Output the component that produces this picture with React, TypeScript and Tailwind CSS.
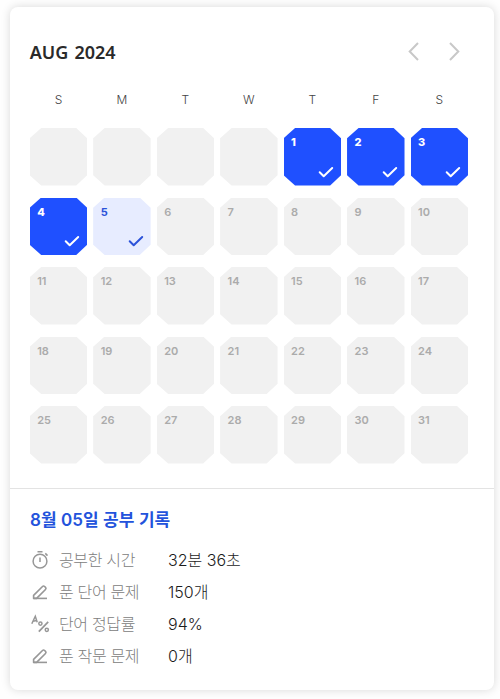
import React from 'react';

type DayStatus = 'done' | 'selected' | 'idle';

interface DayCellProps {
  day: number | null;
  status: DayStatus;
}

const WEEKDAYS = ['S', 'M', 'T', 'W', 'T', 'F', 'S'];

// August 2024 starts on a Thursday
const DAYS: Array<number | null> = [
  null, null, null, null,
  ...Array.from({ length: 31 }, (_, i) => i + 1),
];

const cellStyles: Record<DayStatus, string> = {
  done: 'bg-[#1f50ff] text-white font-extrabold',
  selected: 'bg-[#e7ecff] text-[#2b52d9] font-bold',
  idle: 'bg-[#f1f1f1] text-[#ababab] font-semibold',
};

const getStatus = (day: number | null): DayStatus => {
  if (day === null || day > 5) return 'idle';
  return day === 5 ? 'selected' : 'done';
};

const CheckIcon = () => (
  <svg width="16" height="12" viewBox="0 0 16 12" fill="none" stroke="currentColor" strokeWidth="2" strokeLinecap="round" strokeLinejoin="round">
    <path d="M1.7 6.3 L5.7 10.2 L14.2 2" />
  </svg>
);

const TimerIcon = () => (
  <svg width="20" height="20" viewBox="0 0 20 20" fill="none" stroke="#979797" strokeWidth="1.5">
    <circle cx="10" cy="11.2" r="6.9" />
    <path d="M7.5 1.8h5M10 7.4v4.6M15.3 3.4l2.2 2.2" />
  </svg>
);

const PencilIcon = () => (
  <svg width="20" height="20" viewBox="0 0 20 20" fill="none" stroke="#979797" strokeWidth="1.6" strokeLinejoin="round">
    <path d="M3.6 16.4v-3l8.9-8.9a1.5 1.5 0 0 1 2.1 0l.9.9a1.5 1.5 0 0 1 0 2.1l-8.9 8.9z" />
    <path d="M3.6 16.4H17" />
  </svg>
);

const AccuracyIcon = () => (
  <svg width="20" height="20" viewBox="0 0 20 20" fill="none" stroke="#979797" strokeWidth="1.5">
    <path d="M1.8 9.8L5.3 2.2L7.2 8.2M2.9 7.3L6.8 6.4" />
    <path d="M8.8 17.6L18.2 7.8" strokeWidth="1.7" />
    <circle cx="10.4" cy="9.6" r="1.6" />
    <circle cx="16.8" cy="15.8" r="1.6" />
  </svg>
);

const RECORDS = [
  { icon: <TimerIcon />, label: '공부한 시간', value: '32분 36초' },
  { icon: <PencilIcon />, label: '푼 단어 문제', value: '150개' },
  { icon: <AccuracyIcon />, label: '단어 정답률', value: '94%' },
  { icon: <PencilIcon />, label: '푼 작문 문제', value: '0개' },
];

const DayCell: React.FC<DayCellProps> = ({ day, status }) => (
  <div
    className={`flex h-[57.5px] flex-col justify-between pt-[7px] pr-[7px] pb-[8px] pl-[7.5px] [clip-path:polygon(20%_0,81%_0,100%_18%,100%_82%,81%_100%,20%_100%,0_82%,0_18%)] ${cellStyles[status]}`}
  >
    <span className="text-[11px] leading-[14px]">{day}</span>
    {status !== 'idle' && (
      <span className="self-end">
        <CheckIcon />
      </span>
    )}
  </div>
);

const App: React.FC = () => {
  return (
    <div className="h-[699px] w-[500px] bg-[#fefefe] pt-[7px] pl-[10px]">
      <div className="h-[683px] w-[484px] rounded-lg bg-white font-[Inter,'Noto_Sans_CJK_KR',sans-serif] shadow-[0_0_10px_rgba(0,0,0,0.15)]">
        {/* Calendar */}
        <div className="h-[482px] border-b border-[#e3e3e3] pt-[30px] pr-[26px] pl-[19.7px]">
          <div className="flex h-7 items-center justify-between">
            <h2 className="pt-0.5 font-['Noto_Sans',sans-serif] text-lg leading-7 font-semibold [word-spacing:1.5px] text-[#2a2a2a]">AUG 2024</h2>
            <div className="flex gap-[30px] pr-[8px] text-[#c8c8c8]">
              <button type="button" aria-label="Previous month">
                <svg width="11" height="19" viewBox="0 0 11 19" fill="none" stroke="currentColor" strokeWidth="2">
                  <path d="M10 1L1.7 9.5L10 18" />
                </svg>
              </button>
              <button type="button" aria-label="Next month">
                <svg width="11" height="19" viewBox="0 0 11 19" fill="none" stroke="currentColor" strokeWidth="2">
                  <path d="M1 1L9.3 9.5L1 18" />
                </svg>
              </button>
            </div>
          </div>

          <div className="mt-[27px] grid grid-cols-7 gap-x-1.5 text-center text-xs leading-4 font-light text-[#444]">
            {WEEKDAYS.map((name, i) => (
              <span key={i}>{name}</span>
            ))}
          </div>

          <div className="mt-5 grid grid-cols-7 gap-x-1.5 gap-y-3">
            {DAYS.map((day, i) => (
              <DayCell key={i} day={day} status={getStatus(day)} />
            ))}
          </div>
        </div>

        {/* Study record of the selected day */}
        <div className="pt-[17px] pl-[20px]">
          <h3 className="text-[17px] leading-7 font-semibold tracking-[0.07px] text-[#2353dc]">8월 05일 공부 기록</h3>
          <ul className="mt-[10px]">
            {RECORDS.map((record) => (
              <li key={record.label} className="flex h-8 items-center text-base">
                {record.icon}
                <span className="ml-[9px] w-[109px] font-light tracking-[-0.35px] text-[#808080]">{record.label}</span>
                <span className="font-light text-[#1c1c1c]">{record.value}</span>
              </li>
            ))}
          </ul>
        </div>
      </div>
    </div>
  );
};

export default App;
